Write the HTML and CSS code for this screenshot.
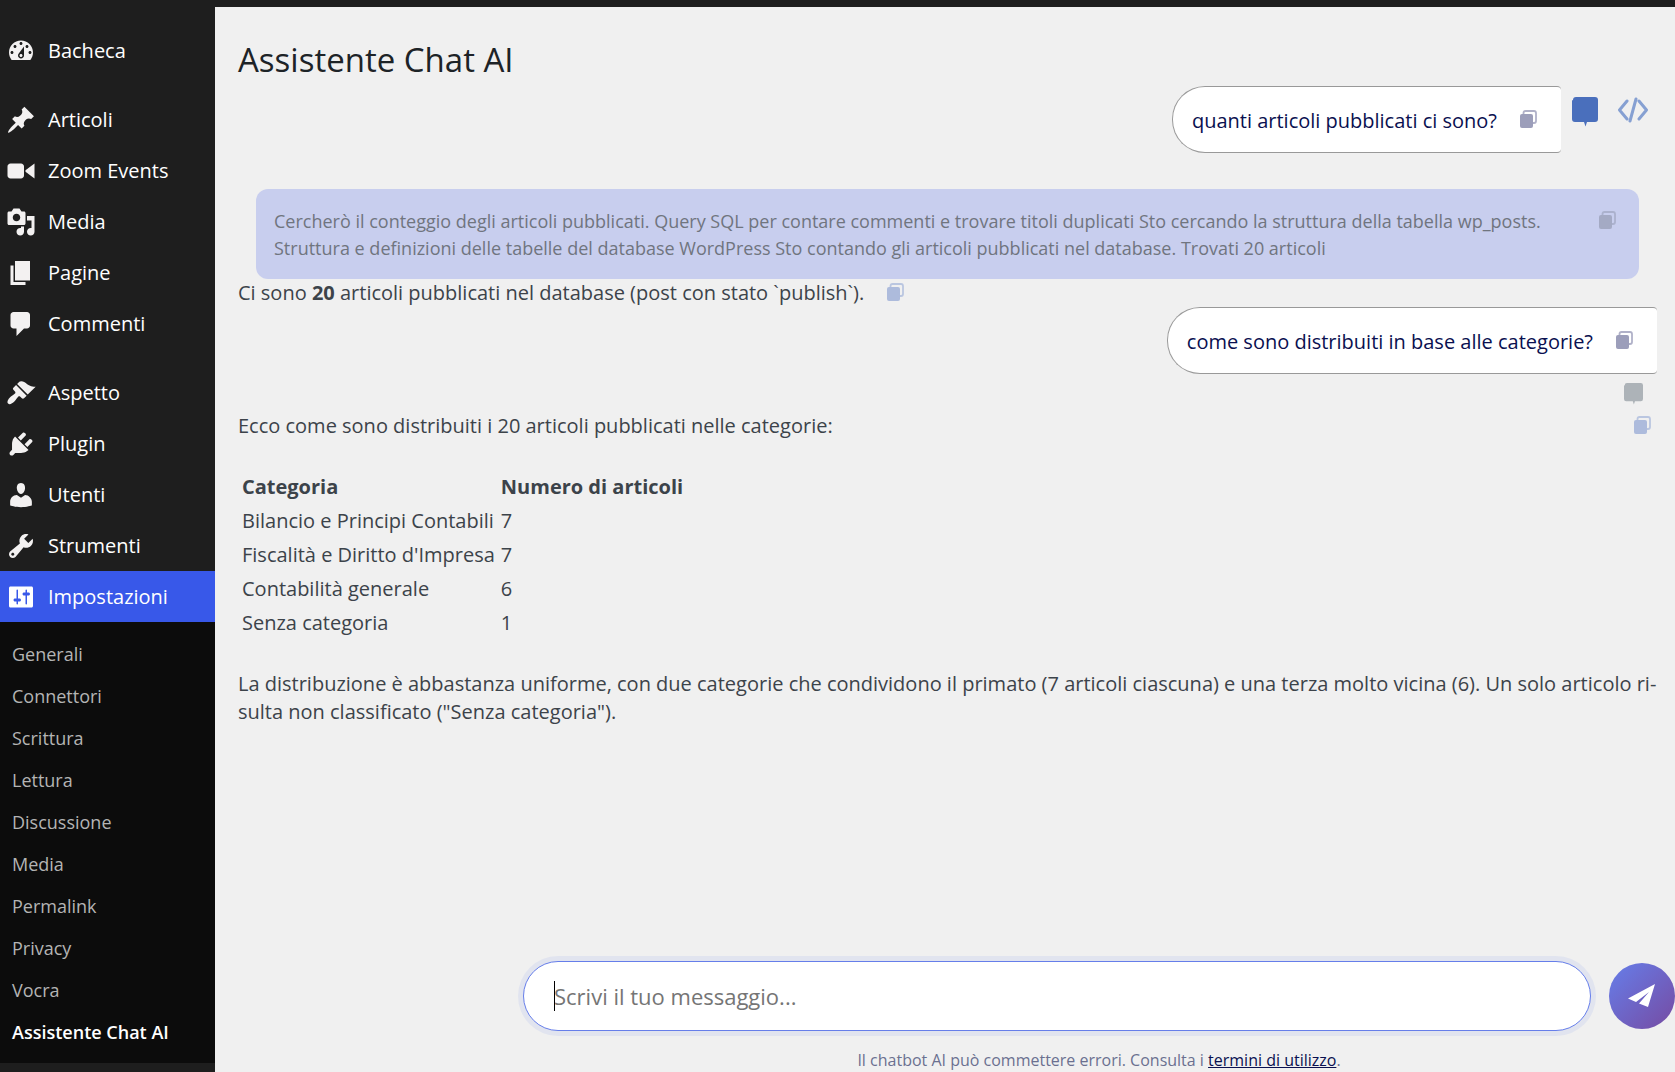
FILE: index.html
```html
<!DOCTYPE html>
<html lang="it">
<head>
    <meta charset="UTF-8">
    <meta name="viewport" content="width=device-width, initial-scale=1.0">
    <title>Assistente Chat AI</title>
    <link rel="stylesheet" href="styles.css">
</head>
<body>
    <svg class="sprite" aria-hidden="true">
        <symbol id="copy" viewBox="0 0 18 18">
            <path d="M4.500 4V3Q4.500 1 6.500 1H15Q17 1 17 3V11Q17 13 15 13H14" fill="none" stroke="currentColor" stroke-width="1.800" opacity="0.8"/>
            <rect x="1" y="4" width="13" height="14" rx="2" fill="currentColor"/>
        </symbol>
        <symbol id="bubble" viewBox="0 0 26 30">
            <path d="M4 0H23Q26 0 26 3V22Q26 25 23 25H15L13.500 29.500L12 25H3Q0 25 0 22V4Q0 3 1 3Q1 0 4 0Z" fill="currentColor"/>
        </symbol>
    </svg>

    <div class="topbar"></div>
    <div class="layout">
        <nav class="sidebar">
            <ul class="menu">
                <li><a href="#"><svg viewBox="0 0 20 20"><path d="M3.760 16h12.480c1.100-1.370 1.760-3.110 1.760-5 0-4.420-3.580-8-8-8s-8 3.580-8 8c0 1.890.66 3.630 1.760 5zM10 4c.55 0 1 .45 1 1s-.45 1-1 1-1-.45-1-1 .45-1 1-1zM6 6c.55 0 1 .45 1 1s-.45 1-1 1-1-.45-1-1 .45-1 1-1zm8 0c.55 0 1 .45 1 1s-.45 1-1 1-1-.45-1-1 .45-1 1-1zm-5.370 5.550L12 7v6c0 1.100-.9 2-2 2s-2-.9-2-2c0-.57.24-1.080.63-1.450zM4 10c.55 0 1 .45 1 1s-.45 1-1 1-1-.45-1-1 .45-1 1-1zm12 0c.55 0 1 .45 1 1s-.45 1-1 1-1-.45-1-1 .45-1 1-1zm-5 3c0-.55-.45-1-1-1s-1 .45-1 1 .45 1 1 1 1-.45 1-1z"/></svg>Bacheca</a></li>
                <li class="separator"></li>
                <li><a href="#"><svg viewBox="0 0 20 20"><path d="M10.440 3.020l1.820-1.820 6.360 6.350-1.830 1.820c-1.050-.68-2.480-.57-3.410.36l-.75.75c-.92.93-1.040 2.350-.35 3.410l-1.830 1.820-2.410-2.410-2.800 2.790c-.42.42-3.380 2.710-3.800 2.290s1.860-3.390 2.280-3.810l2.790-2.790L4.100 9.360l1.830-1.820c1.050.69 2.480.57 3.400-.36l.75-.75c.93-.92 1.050-2.350.36-3.410z"/></svg>Articoli</a></li>
                <li><a href="#"><svg viewBox="0 0 20 20"><path d="M12 13V7c0-1.100-.9-2-2-2H3c-1.100 0-2 .9-2 2v6c0 1.100.9 2 2 2h7c1.100 0 2-.9 2-2zm1-2.500l6 4.500V5l-6 4.500v1z"/></svg>Zoom Events</a></li>
                <li><a href="#"><svg viewBox="0 0 20 20"><path d="M13 11V4c0-.55-.45-1-1-1h-1.670L9 1H5L3.670 3H2c-.55 0-1 .45-1 1v7c0 .55.45 1 1 1h10c.55 0 1-.45 1-1zM7 4.500c1.380 0 2.500 1.120 2.500 2.500S8.380 9.500 7 9.500 4.500 8.380 4.500 7 5.620 4.500 7 4.500zM14 6h5v10.500c0 1.380-1.120 2.500-2.500 2.500S14 17.880 14 16.500s1.120-2.500 2.500-2.500c.17 0 .34.02.5.05V9h-3V6zm-4 8.050V13h2v3.500c0 1.380-1.120 2.500-2.500 2.500S7 17.880 7 16.500 8.120 14 9.500 14c.17 0 .34.02.5.05z"/></svg>Media</a></li>
                <li><a href="#"><svg viewBox="0 0 20 20"><path d="M6 15V2h10v13H6zm-1 1h8v2H3V5h2v11z"/></svg>Pagine</a></li>
                <li><a href="#"><svg viewBox="0 0 20 20"><path d="M5 2h9c1.100 0 2 .9 2 2v7c0 1.100-.9 2-2 2h-2l-5 5v-5H5c-1.100 0-2-.9-2-2V4c0-1.100.9-2 2-2z"/></svg>Commenti</a></li>
                <li class="separator"></li>
                <li><a href="#"><svg viewBox="0 0 20 20"><path d="M14.480 11.060L7.410 3.990l1.500-1.500c.5-.56 2.300-.47 3.510.32 1.210.8 1.430 1.280 2.910 2.100 1.180.64 2.450 1.260 4.450.85zm-.71.71L6.700 4.700 4.930 6.470c-.39.39-.39 1.020 0 1.410l1.060 1.060c.39.39.39 1.030 0 1.420-.6.6-1.430 1.110-2.210 1.690-.35.26-.7.53-1.010.84C1.430 14.230.4 16.080 1.400 17.070c.99 1 2.840-.03 4.180-1.360.31-.31.58-.66.85-1.020.57-.78 1.080-1.610 1.690-2.210.39-.39 1.020-.39 1.410 0l1.060 1.060c.39.39 1.020.39 1.410 0z"/></svg>Aspetto</a></li>
                <li><a href="#"><svg viewBox="0 0 20 20"><path d="M13.110 4.360L9.870 7.600 8 5.730l3.240-3.240c.35-.34 1.050-.2 1.560.32.52.51.66 1.210.31 1.550zm-8 1.770l.91-1.120 9.010 9.010-1.190.84c-.71.71-2.630 1.160-3.820 1.160H6.140L4.900 17.260c-.59.59-1.540.59-2.120 0-.59-.58-.59-1.530 0-2.120l1.240-1.240v-3.880c0-1.130.4-3.190 1.090-3.890zm7.260 3.970l3.240-3.240c.34-.35 1.040-.21 1.550.31.52.51.66 1.210.31 1.550l-3.240 3.250z"/></svg>Plugin</a></li>
                <li><a href="#"><svg viewBox="0 0 20 20"><path d="M10 9.250c-2.270 0-2.730-3.440-2.730-3.440C7 4.020 7.820 2 9.970 2c2.160 0 2.980 2.020 2.710 3.810 0 0-.41 3.440-2.680 3.440zm0 2.570L12.720 10c2.390 0 4.520 2.330 4.520 4.530v2.490s-3.650 1.130-7.240 1.130c-3.650 0-7.240-1.130-7.240-1.130v-2.490c0-2.250 1.940-4.480 4.470-4.480z"/></svg>Utenti</a></li>
                <li><a href="#"><svg viewBox="0 0 20 20"><path d="M16.680 9.770c-1.340 1.340-3.300 1.670-4.950.99l-5.410 6.520c-.99.99-2.590.99-3.580 0s-.99-2.590 0-3.570l6.520-5.420c-.68-1.650-.35-3.610.99-4.950 1.280-1.280 3.120-1.620 4.720-1.060l-2.890 2.890 2.820 2.820 2.860-2.870c.53 1.580.18 3.390-1.080 4.650zM3.810 16.210c.4.39 1.040.39 1.430 0 .4-.4.4-1.040 0-1.430-.39-.4-1.030-.4-1.430 0-.39.39-.39 1.030 0 1.430z"/></svg>Strumenti</a></li>
                <li class="current"><a href="#"><svg viewBox="0 0 20 20"><path d="M18 16V4c0-.55-.45-1-1-1H3c-.55 0-1 .45-1 1v12c0 .55.45 1 1 1h14c.55 0 1-.45 1-1zM8 11h1c.55 0 1 .45 1 1s-.45 1-1 1H8v1.500c0 .28-.22.5-.5.5s-.5-.22-.5-.5V13H6c-.55 0-1-.45-1-1s.45-1 1-1h1V5.500c0-.28.22-.5.5-.5s.5.22.5.5V11zm5-2h-1c-.55 0-1-.45-1-1s.45-1 1-1h1V5.500c0-.28.22-.5.5-.5s.5.22.5.5V7h1c.55 0 1 .45 1 1s-.45 1-1 1h-1v5.500c0 .28-.22.5-.5.5s-.5-.22-.5-.5V9z"/></svg>Impostazioni</a></li>
            </ul>
            <ul class="submenu">
                <li><a href="#">Generali</a></li>
                <li><a href="#">Connettori</a></li>
                <li><a href="#">Scrittura</a></li>
                <li><a href="#">Lettura</a></li>
                <li><a href="#">Discussione</a></li>
                <li><a href="#">Media</a></li>
                <li><a href="#">Permalink</a></li>
                <li><a href="#">Privacy</a></li>
                <li><a href="#">Vocra</a></li>
                <li><a href="#" class="active">Assistente Chat AI</a></li>
            </ul>
        </nav>

        <main class="content">
            <h1>Assistente Chat AI</h1>

            <div class="chat">
                <div class="user-row">
                    <div class="user-message">
                        <span>quanti articoli pubblicati ci sono?</span>
                        <button class="copy" aria-label="Copia"><svg><use href="#copy"/></svg></button>
                    </div>
                    <div class="tools">
                        <button class="tool-chat" aria-label="Mostra messaggi"><svg><use href="#bubble"/></svg></button>
                        <button class="tool-code" aria-label="Mostra codice">
                            <svg viewBox="0 0 30 26"><path d="M9 4L1.500 13L9 22M21 4L28.500 13L21 22M18 2L12 24" fill="none" stroke="currentColor" stroke-width="3" stroke-linecap="round" stroke-linejoin="round"/></svg>
                        </button>
                    </div>
                </div>

                <div class="thinking">
                    <p>Cercherò il conteggio degli articoli pubblicati. Query SQL per contare commenti e trovare titoli duplicati Sto cercando la struttura della tabella wp_posts. Struttura e definizioni delle tabelle del database WordPress Sto contando gli articoli pubblicati nel database. Trovati 20 articoli</p>
                    <button class="copy" aria-label="Copia"><svg><use href="#copy"/></svg></button>
                </div>

                <div class="answer">
                    <p>Ci sono <strong>20</strong> articoli pubblicati nel database (post con stato `publish`).</p>
                    <button class="copy" aria-label="Copia"><svg><use href="#copy"/></svg></button>
                </div>

                <div class="user-row">
                    <div class="user-message">
                        <span>come sono distribuiti in base alle categorie?</span>
                        <button class="copy" aria-label="Copia"><svg><use href="#copy"/></svg></button>
                    </div>
                </div>

                <div class="toggle-row">
                    <button class="toggle" aria-label="Mostra ragionamento"><svg><use href="#bubble"/></svg></button>
                </div>

                <div class="answer wide">
                    <p>Ecco come sono distribuiti i 20 articoli pubblicati nelle categorie:</p>
                    <button class="copy" aria-label="Copia"><svg><use href="#copy"/></svg></button>
                </div>
                <table>
                    <thead>
                        <tr><th>Categoria</th><th>Numero di articoli</th></tr>
                    </thead>
                    <tbody>
                        <tr><td>Bilancio e Principi Contabili</td><td>7</td></tr>
                        <tr><td>Fiscalità e Diritto d'Impresa</td><td>7</td></tr>
                        <tr><td>Contabilità generale</td><td>6</td></tr>
                        <tr><td>Senza categoria</td><td>1</td></tr>
                    </tbody>
                </table>
                <p>La distribuzione è abbastanza uniforme, con due categorie che condividono il primato (7 articoli ciascuna) e una terza molto vicina (6). Un solo articolo ri&shy;sulta non classificato ("Senza categoria").</p>
            </div>

            <form class="composer">
                <div class="composer-row">
                    <div class="field">
                        <input type="text" id="message" placeholder="Scrivi il tuo messaggio..." aria-label="Messaggio">
                        <span class="caret"></span>
                    </div>
                    <button type="button" class="send" aria-label="Invia">
                        <svg viewBox="0 0 28 24"><path d="M27 0L0 14.500L8 18L21 8L11 19.500L20 23Z" fill="currentColor"/></svg>
                    </button>
                </div>
                <p class="disclaimer">Il chatbot AI può commettere errori. Consulta i <a href="#">termini di utilizzo</a>.</p>
            </form>
        </main>
    </div>
</body>
</html>
```

FILE: styles.css
```css
* {
    box-sizing: border-box;
}
body {
    margin: 0;
    min-height: 100vh;
    display: flex;
    flex-direction: column;
    background-color: #f0f0f0;
    color: #3c434a;
    font-family: "Segoe UI", "Open Sans", sans-serif;
    font-size: 20px;
    line-height: 28px;
}
h1, p, ul {
    margin: 0;
    padding: 0;
}
ul {
    list-style: none;
}
button {
    display: flex;
    padding: 0;
    border: none;
    background: none;
    color: inherit;
    cursor: pointer;
}
.sprite {
    position: absolute;
    width: 0;
    height: 0;
}
.topbar {
    height: 7px;
    background-color: #1e1e1e;
}
.layout {
    flex: 1;
    display: flex;
}

/* menu laterale */
.sidebar {
    width: 215px;
    flex-shrink: 0;
    padding-top: 18px;
    background-color: #1e1e1e;
}
.menu a {
    display: flex;
    align-items: center;
    gap: 12px;
    height: 51px;
    padding-left: 6px;
    color: #fff;
    text-decoration: none;
}
.menu svg {
    width: 30px;
    height: 30px;
    fill: #f3f1f1;
}
.separator {
    height: 18px;
}
.menu .current a {
    background-color: #3858e9;
}
.menu .current svg {
    fill: #fff;
}
.submenu {
    padding: 11px 0 10px;
    background-color: #0c0c0c;
}
.submenu a {
    display: block;
    padding-left: 12px;
    color: #b4b4b4;
    font-size: 18px;
    line-height: 42px;
    text-decoration: none;
}
.submenu .active {
    color: #fff;
    font-weight: 600;
}

/* chat */
.content {
    flex: 1;
    min-width: 0;
    display: flex;
    flex-direction: column;
    padding-top: 33px;
}
h1 {
    margin: 0 16px 6px 23px;
    color: #1d2327;
    font-size: 33px;
    font-weight: 400;
    line-height: 40px;
}
.chat {
    flex: 1;
    padding: 0 18px 0 23px;
}
.user-row {
    display: flex;
    justify-content: flex-end;
}
.user-message {
    display: flex;
    align-items: center;
    gap: 22px;
    height: 67px;
    padding: 2px 24px 0 19px;
    border: 1px solid #999;
    border-right: none;
    border-radius: 33px 4px 4px 33px;
    background-color: #fff;
    color: #0a1050;
}
.copy svg {
    width: 18px;
    height: 18px;
}
.user-message .copy {
    padding-bottom: 4px;
    color: #9c9eba;
}
.tools {
    display: flex;
    gap: 20px;
    padding: 11px 9px 0 11px;
}
.tool-chat {
    color: #4a6fbc;
}
.tool-chat svg {
    width: 26px;
    height: 30px;
}
.tool-code {
    color: #86a0d2;
}
.tool-code svg {
    width: 30px;
    height: 26px;
}
.thinking {
    display: flex;
    justify-content: space-between;
    gap: 40px;
    margin: 36px 18px 0;
    padding: 19px 23px 17px 18px;
    border-radius: 12px;
    background-color: #c8ceee;
    color: #70757f;
    font-size: 18px;
    line-height: 27px;
}
.thinking .copy {
    padding-top: 3px;
    color: #a4aac4;
}
.answer {
    display: flex;
    gap: 22px;
}
.answer .copy {
    padding-top: 4px;
    color: #adbbdc;
}
.wide {
    justify-content: space-between;
    padding-right: 6px;
}
.toggle-row {
    display: flex;
    justify-content: flex-end;
    height: 38px;
    padding: 9px 14px 0;
}
.toggle {
    color: #adb3b8;
}
.toggle svg {
    width: 19px;
    height: 22px;
}
table {
    margin: 29px 0;
    border-spacing: 2px;
}
th, td {
    padding: 2px;
    text-align: left;
}
th {
    font-weight: 700;
}

/* casella del messaggio */
.composer {
    padding-left: 308px;
}
.composer-row {
    display: flex;
    align-items: center;
    gap: 18px;
}
.field {
    position: relative;
    flex: 1;
}
.field input {
    display: block;
    width: 100%;
    height: 70px;
    padding: 0 30px;
    border: 1px solid #667eea;
    border-radius: 35px;
    outline: none;
    box-shadow: 0 0 0 5px rgba(102, 126, 234, 0.1);
    background-color: #fff;
    color: #2c3338;
    font-family: inherit;
    font-size: 22px;
}
.field input::placeholder {
    color: #757575;
}
.caret {
    position: absolute;
    top: 20px;
    left: 31px;
    width: 1px;
    height: 30px;
    background-color: #000;
}
.send {
    width: 66px;
    height: 66px;
    align-items: center;
    justify-content: center;
    border-radius: 50%;
    background: linear-gradient(135deg, #667eea 0%, #764ba2 100%);
    color: #fff;
}
.send svg {
    width: 28px;
    height: 24px;
}
.disclaimer {
    padding-top: 17px;
    color: #6b7090;
    font-size: 16px;
    line-height: 24px;
    text-align: center;
}
.disclaimer a {
    color: #0a1050;
}
```
